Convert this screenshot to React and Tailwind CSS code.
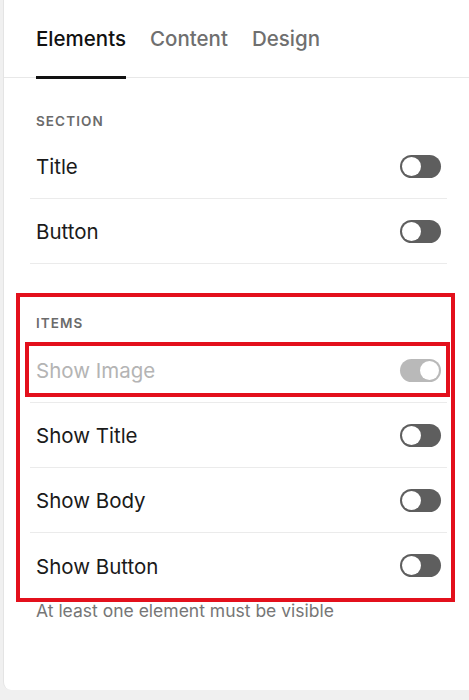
import React from "react";

function Toggle({ disabled }) {
  if (disabled) {
    return (
      <div className="flex h-[23px] w-[41px] items-center justify-end rounded-full bg-[#b9b9b9] p-[2px]">
        <div className="h-[19px] w-[19px] rounded-full bg-white" />
      </div>
    );
  }
  return (
    <div className="flex h-[23px] w-[41px] items-center rounded-full bg-[#5e5e5e] p-[2px]">
      <div className="h-[19px] w-[19px] rounded-full bg-white" />
    </div>
  );
}

function Row({ label, disabled, last }) {
  return (
    <div
      className={
        "flex h-[65px] items-center justify-between px-[6px] " +
        (last ? "" : "border-b border-[#ebebeb]")
      }
    >
      <span
        className={
          "pt-[2px] text-[20.5px] leading-6 " +
          (disabled ? "text-[#b4b4b4]" : "text-[#1a1a1a]")
        }
      >
        {label}
      </span>
      <Toggle disabled={disabled} />
    </div>
  );
}

function GroupLabel({ children }) {
  return (
    <div className="px-[6px] text-[13.5px] font-semibold uppercase leading-4 tracking-[0.08em] text-[#6b6b6b]">
      {children}
    </div>
  );
}

export default function App() {
  const tabs = ["Elements", "Content", "Design"];

  return (
    <div
      className="flex h-[700px] w-[469px] flex-col bg-[#f0f0f0]"
      style={{ fontFamily: "Inter, 'Noto Sans', sans-serif" }}
    >
      <div className="ml-[3px] h-[690px] overflow-hidden rounded-bl-[8px] border-l border-[#e4e4e4] bg-white">
        <nav className="flex gap-[24px] border-b border-[#e8e8e8] pl-[32px]">
          {tabs.map((tab, i) => (
            <div
              key={tab}
              className={
                "-mb-[2px] pt-[27px] pb-[25px] text-[20.5px] font-medium leading-6 " +
                (i === 0
                  ? "border-b-[3px] border-[#111] text-[#111]"
                  : "border-b-[3px] border-transparent text-[#6f6f6f]")
              }
            >
              {tab}
            </div>
          ))}
        </nav>

        <div className="ml-[26px] w-[417px]">
          <div className="mt-[35px]">
            <GroupLabel>Section</GroupLabel>
          </div>
          <div className="mt-[5px]">
            <Row label="Title" />
            <Row label="Button" />
          </div>

          <div className="relative mt-[29px] pt-[22px]">
            <GroupLabel>Items</GroupLabel>
            <div className="mt-[7px]">
              <Row label="Show Image" disabled />
              <Row label="Show Title" />
              <Row label="Show Body" />
              <Row label="Show Button" last />
            </div>
            <div className="pointer-events-none absolute -left-[14px] -right-[8px] top-0 -bottom-[4px] border-4 border-[#e3101c]" />
            <div className="pointer-events-none absolute -left-[5px] -right-[3px] top-[49px] h-[55px] border-4 border-[#e3101c]" />
          </div>

          <p className="mt-[3px] px-[6px] text-[17.5px] leading-5 text-[#767676]">
            At least one element must be visible
          </p>
        </div>
      </div>
    </div>
  );
}
